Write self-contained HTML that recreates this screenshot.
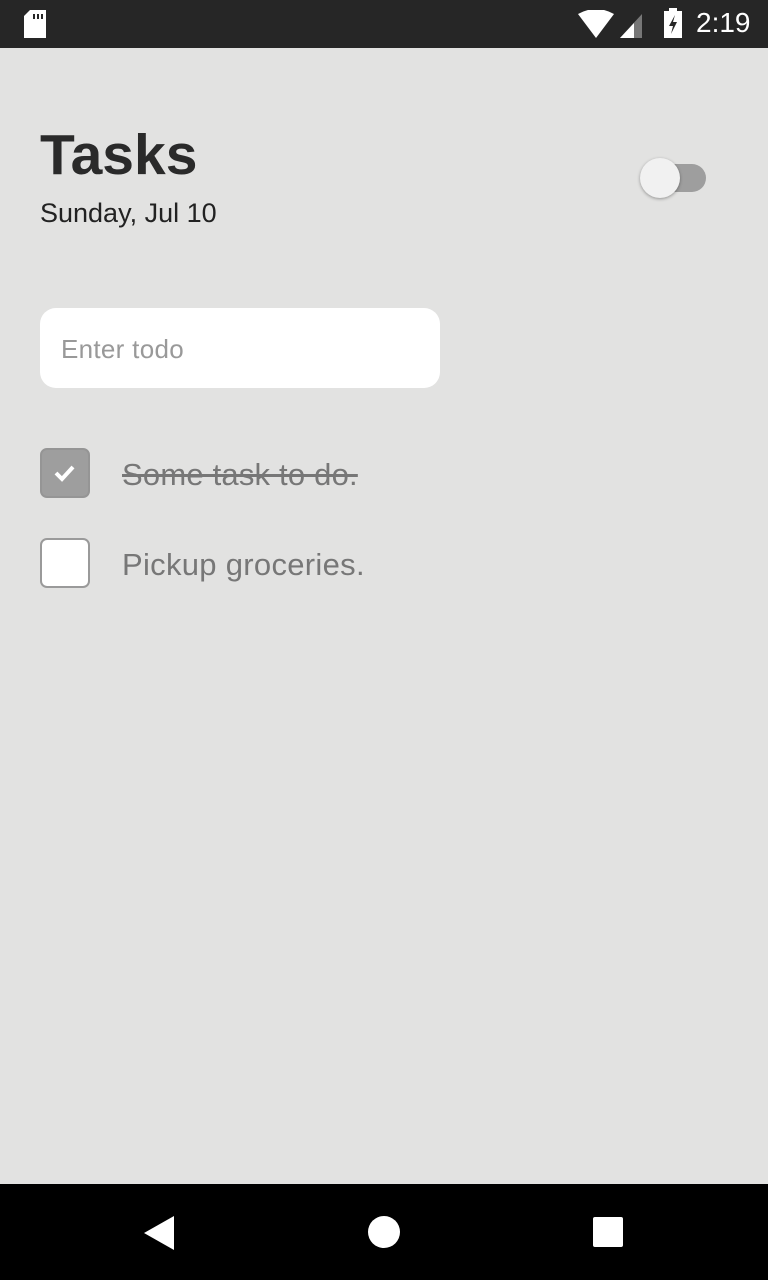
<!DOCTYPE html>
<html><head><style>
body{margin:0;width:768px;height:1280px;background:#e2e2e1;font-family:"Liberation Sans",sans-serif;position:relative;overflow:hidden}
.sb{position:absolute;top:0;left:0;width:768px;height:48px;background:#262626}
.nb{position:absolute;top:1184px;left:0;width:768px;height:96px;background:#000}
.a{position:absolute}
</style></head><body>
<div class="sb">
<svg class="a" style="left:24px;top:10px" width="24" height="28"><path d="M6 0H22V28H0V6Z" fill="#fff"/><rect x="9" y="4" width="2" height="5" fill="#262626"/><rect x="13" y="4" width="2" height="5" fill="#262626"/><rect x="17" y="4" width="2" height="5" fill="#262626"/></svg>
<svg class="a" style="left:578px;top:10px" width="70" height="30"><path d="M0 4Q18 -6 36 4L18 28Z" fill="#fff"/><path d="M42 28L64 4V28Z" fill="#777"/><path d="M42 28L56 13V28Z" fill="#fff"/></svg>
<svg class="a" style="left:664px;top:8px" width="20" height="32"><rect x="5" y="0" width="8" height="3" fill="#fff"/><rect x="0" y="3" width="18" height="27" fill="#fff"/><path d="M11 7L5 18H9L7 26L13 14H9Z" fill="#262626"/></svg>
<div class="a" style="left:696px;top:7px;color:#fff;font-size:28px">2:19</div>
</div>
<div class="a" style="left:40px;top:122px;font-size:57px;font-weight:bold;color:#2a2a2a">Tasks</div>
<div class="a" style="left:40px;top:198px;font-size:27px;color:#222">Sunday, Jul 10</div>
<div class="a" style="left:644px;top:164px;width:62px;height:28px;border-radius:14px;background:#9e9e9e"></div>
<div class="a" style="left:640px;top:158px;width:40px;height:40px;border-radius:20px;background:#f1f1f1;box-shadow:0 1px 3px rgba(0,0,0,.35)"></div>
<div class="a" style="left:40px;top:308px;width:400px;height:80px;border-radius:16px;background:#fff"></div>
<div class="a" style="left:61px;top:334px;font-size:26px;color:#999;letter-spacing:0.3px">Enter todo</div>
<div class="a" style="left:40px;top:448px;width:46px;height:46px;border-radius:7px;background:#9e9e9e;border:2px solid #959595"></div>
<svg class="a" style="left:52px;top:460px" width="26" height="26"><path d="M4 13L10 19L21 7" stroke="#fff" stroke-width="4" fill="none"/></svg>
<div class="a" style="left:122px;top:457px;font-size:31px;color:#777;text-decoration:line-through;letter-spacing:0.2px">Some task to do.</div>
<div class="a" style="left:40px;top:538px;width:46px;height:46px;border-radius:7px;background:#fff;border:2px solid #9a9a9a"></div>
<div class="a" style="left:122px;top:547px;font-size:31px;color:#777;letter-spacing:0.3px">Pickup groceries.</div>
<div class="nb">
<svg class="a" style="left:144px;top:32px" width="32" height="34"><path d="M30 0V34L0 17Z" fill="#fff"/></svg>
<div class="a" style="left:368px;top:32px;width:32px;height:32px;border-radius:16px;background:#fff"></div>
<div class="a" style="left:593px;top:33px;width:30px;height:30px;border-radius:2px;background:#fff"></div>
</div>
</body></html>
